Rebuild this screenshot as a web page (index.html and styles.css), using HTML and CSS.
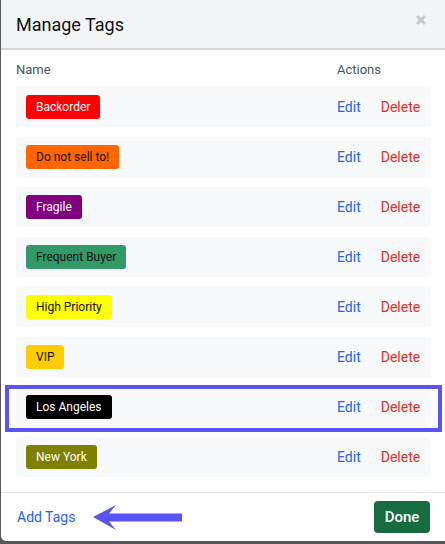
FILE: index.html
```html
<!DOCTYPE html>
<html>
<head>
<meta charset="utf-8">
<link rel="stylesheet" href="styles.css">
</head>
<body>
<div class="modal">
  <div class="modal-header">
    <h1 class="title">Manage Tags</h1>
    <button class="close" aria-label="Close">
      <svg width="10" height="10" viewBox="0 0 10 10"><path d="M1 1L9 9M9 1L1 9" stroke="#c3c7cc" stroke-width="2.8" stroke-linecap="butt"/></svg>
    </button>
  </div>
  <div class="modal-body">
    <div class="thead">
      <span>Name</span>
      <span>Actions</span>
    </div>
    <div class="rows">
      <div class="row"><span class="tag t-red">Backorder</span><div class="actions"><a class="edit">Edit</a><a class="delete">Delete</a></div></div>
      <div class="row"><span class="tag t-orange">Do not sell to!</span><div class="actions"><a class="edit">Edit</a><a class="delete">Delete</a></div></div>
      <div class="row"><span class="tag t-purple">Fragile</span><div class="actions"><a class="edit">Edit</a><a class="delete">Delete</a></div></div>
      <div class="row"><span class="tag t-green">Frequent Buyer</span><div class="actions"><a class="edit">Edit</a><a class="delete">Delete</a></div></div>
      <div class="row"><span class="tag t-yellow">High Priority</span><div class="actions"><a class="edit">Edit</a><a class="delete">Delete</a></div></div>
      <div class="row"><span class="tag t-gold">VIP</span><div class="actions"><a class="edit">Edit</a><a class="delete">Delete</a></div></div>
      <div class="row highlight"><span class="tag t-black">Los Angeles</span><div class="actions"><a class="edit">Edit</a><a class="delete">Delete</a></div></div>
      <div class="row"><span class="tag t-olive">New York</span><div class="actions"><a class="edit">Edit</a><a class="delete">Delete</a></div></div>
    </div>
  </div>
  <div class="modal-footer">
    <a class="add">Add Tags</a>
    <svg class="arrow" width="92" height="28" viewBox="0 0 92 28"><path d="M1 13L24 1L17 9.5L90 9.5L90 17.5L17 17.5L24 26Z" fill="#5b54f5"/></svg>
    <button class="done">Done</button>
  </div>
</div>
</body>
</html>
```
FILE: styles.css
```css
html, body {
  margin: 0;
  padding: 0;
}
body {
  background: #575757;
  width: 445px;
  height: 544px;
  overflow: hidden;
  font-family: Roboto, "Liberation Sans", sans-serif;
}
.modal {
  margin-left: 1px;
  width: 444px;
  height: 541px;
  background: #fff;
  border-radius: 0 0 0 5px;
  display: flex;
  flex-direction: column;
  overflow: hidden;
}
.modal-header {
  height: 48px;
  background: #f3f4f6;
  border-bottom: 2px solid #d5d6d8;
  display: flex;
  align-items: center;
  justify-content: space-between;
  padding: 0 19px 0 15px;
  flex-shrink: 0;
}
.title {
  margin: 0;
  font-size: 18px;
  font-weight: 400;
  color: #111;
}
.close {
  border: 0;
  background: none;
  padding: 0;
  margin-top: -8px;
  display: flex;
}
.modal-body {
  padding: 0 14px 15px 15px;
  flex: 1;
}
.thead {
  display: grid;
  grid-template-columns: 1fr 94px;
  height: 37px;
  align-items: center;
  font-size: 13px;
  color: #4b5563;
  padding-top: 5px;
  box-sizing: border-box;
  padding-bottom: 3px;
}
.rows {
  display: flex;
  flex-direction: column;
  gap: 10px;
}
.row {
  position: relative;
  height: 40px;
  background: #f8f9fb;
  border-radius: 4px;
  display: grid;
  grid-template-columns: 1fr 94px;
  align-items: center;
  padding-left: 10px;
}
.row.highlight::after {
  content: "";
  position: absolute;
  left: -11px;
  right: -11px;
  top: -2px;
  bottom: -5px;
  border: 4px solid #5b54f5;
  pointer-events: none;
}
.tag {
  justify-self: start;
  height: 24px;
  line-height: 24px;
  padding: 0 10px;
  border-radius: 3px;
  font-size: 12px;
  margin-top: -1px;
}
.t-red { background: #ff0000; color: #fff; }
.t-orange { background: #ff6600; color: #111; }
.t-purple { background: #800080; color: #fff; }
.t-green { background: #339966; color: #111; }
.t-yellow { background: #ffff00; color: #111; }
.t-gold { background: #ffcc00; color: #111; }
.t-black { background: #000; color: #fff; }
.t-olive { background: #808000; color: #fff; }
.actions {
  display: flex;
  gap: 20px;
  font-size: 14px;
}
.edit { color: #2563eb; }
.delete { color: #e0301e; }
.modal-footer {
  position: relative;
  height: 48px;
  border-top: 1px solid #e2e4e7;
  display: flex;
  align-items: center;
  justify-content: space-between;
  padding: 0 15px 0 16px;
  flex-shrink: 0;
}
.add {
  font-size: 14px;
  color: #2563eb;
}
.arrow {
  position: absolute;
  left: 91px;
  top: 11px;
}
.done {
  height: 32px;
  width: 56px;
  padding: 0;
  border: 0;
  border-radius: 4px;
  background: #176b40;
  color: #fff;
  font-family: Roboto, "Liberation Sans", sans-serif;
  font-size: 15px;
  font-weight: 500;
}
```
